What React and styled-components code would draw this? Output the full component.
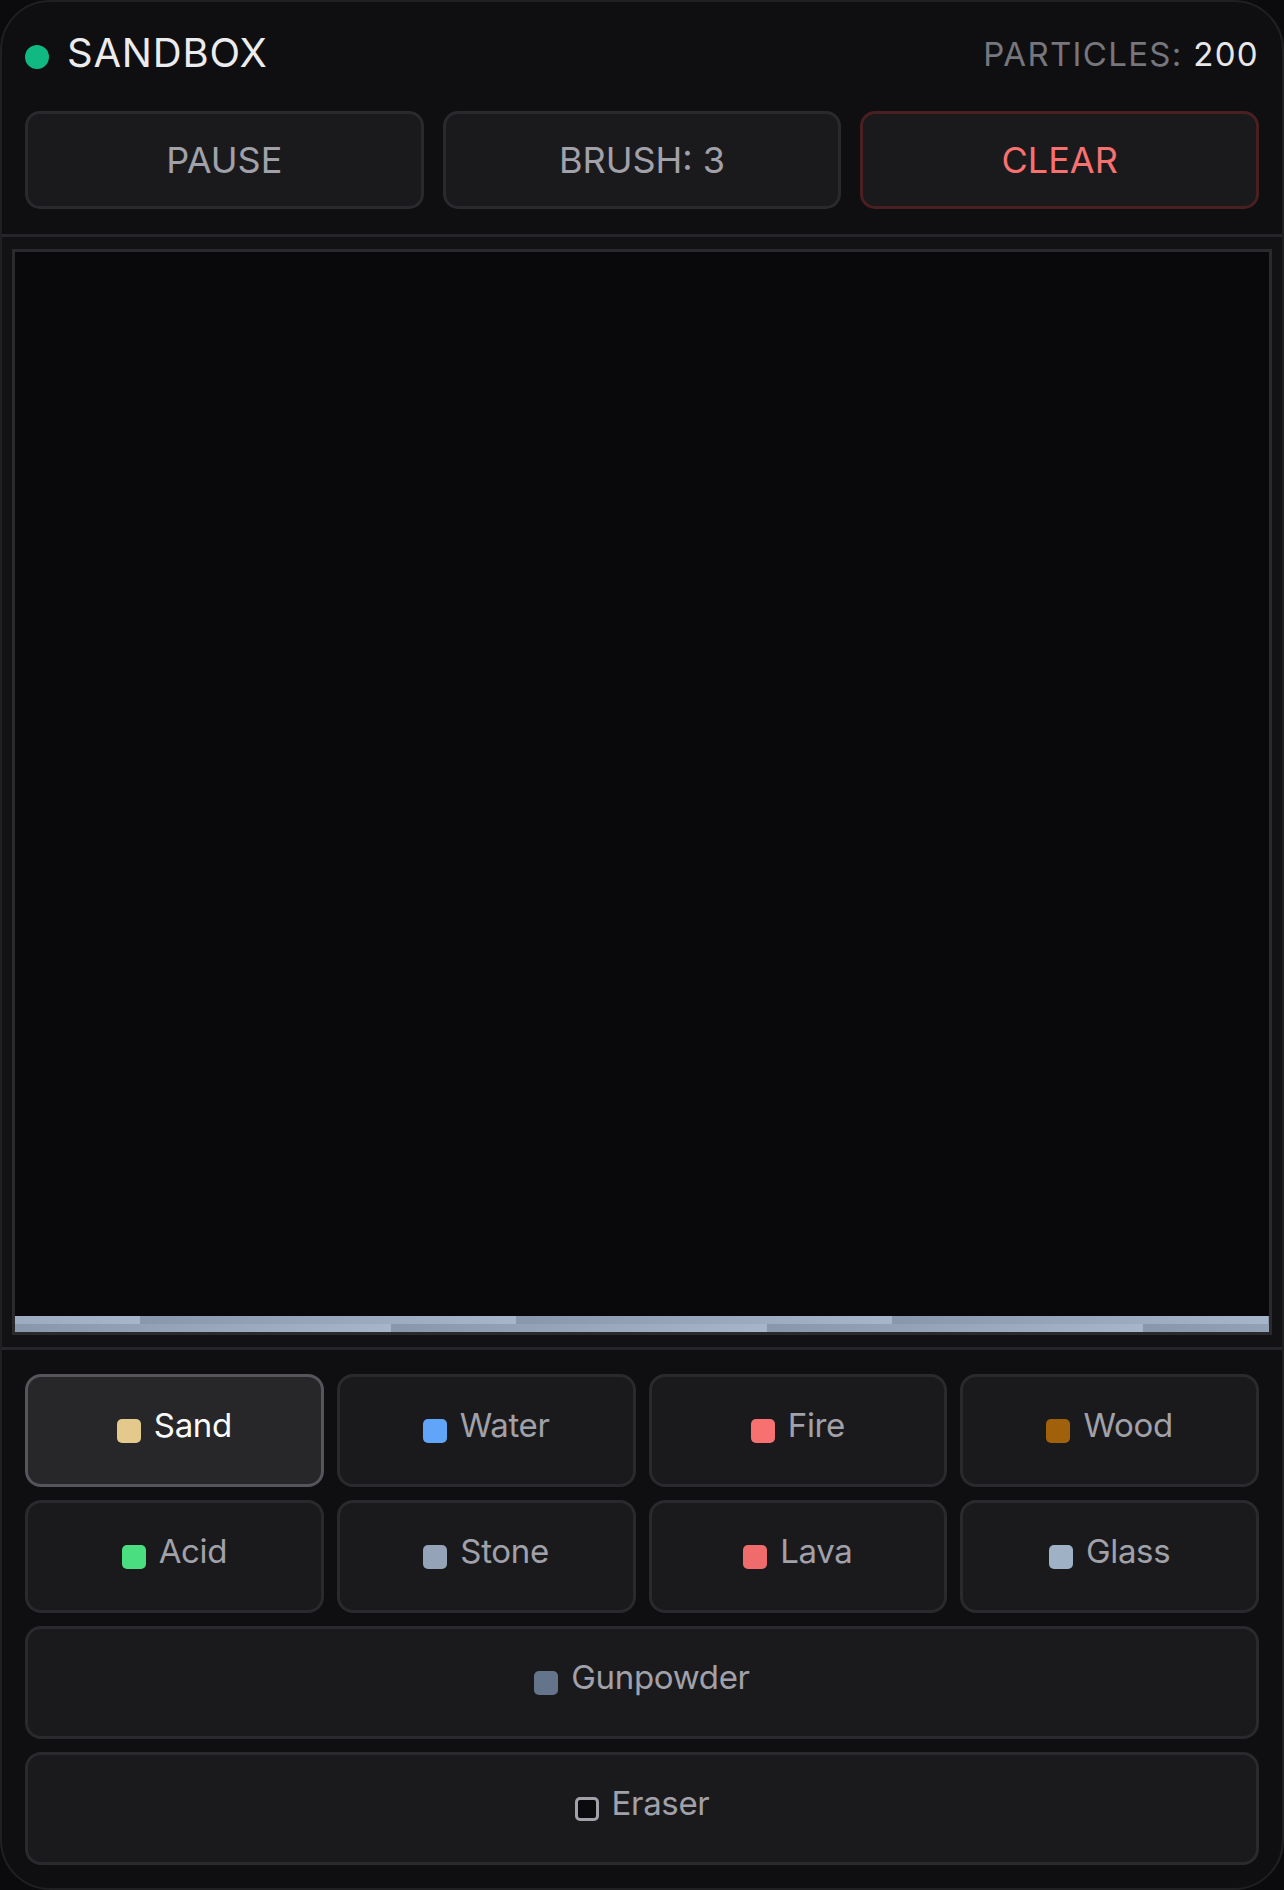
import React from "react";
import styled, { createGlobalStyle } from "styled-components";

const GlobalStyle = createGlobalStyle`
  html, body {
    margin: 0;
    padding: 0;
    background: #0b0b0d;
  }
  body {
    font-family: Inter, "Noto Sans", sans-serif;
    -webkit-font-smoothing: antialiased;
  }
  * {
    box-sizing: border-box;
  }
`;

const Panel = styled.div`
  width: 1284px;
  height: 1890px;
  display: flex;
  flex-direction: column;
  background: #0f0f11;
  border: 2px solid #202023;
  border-radius: 50px;
  overflow: hidden;
`;

const Header = styled.header`
  padding: 20px 23px 25px;
  border-bottom: 3px solid #26262a;
`;

const TitleRow = styled.div`
  height: 60px;
  display: flex;
  align-items: center;
  justify-content: space-between;
`;

const Brand = styled.div`
  display: flex;
  align-items: center;
  gap: 18px;
`;

const Dot = styled.span`
  width: 24px;
  height: 24px;
  margin-top: 10px;
  border-radius: 50%;
  background: #10b981;
`;

const Title = styled.h1`
  margin: 0;
  font-size: 40px;
  font-weight: 400;
  letter-spacing: 0.02em;
  color: #ececee;
`;

const Count = styled.div`
  margin-top: 4px;
  font-size: 33px;
  letter-spacing: 0.04em;
  color: #76767d;
`;

const CountValue = styled.span`
  color: #e8e8ea;
`;

const Controls = styled.div`
  margin-top: 29px;
  display: grid;
  grid-template-columns: repeat(3, 1fr);
  gap: 19px;
`;

const ControlButton = styled.button`
  height: 98px;
  border-radius: 15px;
  border: 3px solid ${(p) => (p.$danger ? "#4a1f22" : "#2a2a2e")};
  background: #1a1a1d;
  color: ${(p) => (p.$danger ? "#f87171" : "#a1a1aa")};
  font-family: inherit;
  font-size: 36px;
  letter-spacing: 0;
  cursor: pointer;
`;

const Stage = styled.section`
  flex: 1;
  display: flex;
  flex-direction: column;
  padding: 12px 10px;
  background: #121214;
  border-bottom: 3px solid #26262a;
`;

const Canvas = styled.div`
  flex: 1;
  display: flex;
  flex-direction: column;
  justify-content: flex-end;
  background: #09090b;
  border: 3px solid #2a2a2e;
`;

const ParticleRow = styled.div`
  height: 8px;
  background: repeating-linear-gradient(
    90deg,
    #8997ad ${(p) => p.$offset - 376}px,
    #a7b5cb ${(p) => p.$offset}px
  );
`;

const Materials = styled.section`
  padding: 24px 23px 23px;
  display: grid;
  grid-template-columns: repeat(4, 1fr);
  grid-auto-rows: 113px;
  gap: 13px;
`;

const MaterialButton = styled.button`
  grid-column: ${(p) => (p.$wide ? "1 / -1" : "auto")};
  display: flex;
  align-items: center;
  justify-content: center;
  gap: 13px;
  border-radius: 16px;
  border: 3px solid ${(p) => (p.$active ? "#55555c" : "#2a2a2e")};
  background: ${(p) => (p.$active ? "#27272a" : "#1a1a1d")};
  color: ${(p) => (p.$active ? "#fafafa" : "#a1a1aa")};
  font-family: inherit;
  font-size: 33px;
  letter-spacing: -0.01em;
  cursor: pointer;
`;

const Swatch = styled.span`
  width: 24px;
  height: 24px;
  border-radius: 5px;
  background: ${(p) => p.$color || "#0b0b0d"};
  border: ${(p) => (p.$color ? "none" : "3px solid #a1a1aa")};
`;

const Label = styled.span`
  margin-bottom: 12px;
`;

const materials = [
  { name: "Sand", color: "#e3c98c" },
  { name: "Water", color: "#60a5fa" },
  { name: "Fire", color: "#f87171" },
  { name: "Wood", color: "#a1600a" },
  { name: "Acid", color: "#4ade80" },
  { name: "Stone", color: "#94a3b8" },
  { name: "Lava", color: "#f06b6b" },
  { name: "Glass", color: "#9fb1c5" },
  { name: "Gunpowder", color: "#64748b", wide: true },
  { name: "Eraser", color: null, wide: true },
];

const App = () => {
  return (
    <Panel>
      <GlobalStyle />
      <Header>
        <TitleRow>
          <Brand>
            <Dot />
            <Title>SANDBOX</Title>
          </Brand>
          <Count>
            PARTICLES: <CountValue>200</CountValue>
          </Count>
        </TitleRow>
        <Controls>
          <ControlButton>PAUSE</ControlButton>
          <ControlButton>BRUSH: 3</ControlButton>
          <ControlButton $danger>CLEAR</ControlButton>
        </Controls>
      </Header>

      <Stage>
        <Canvas>
          <ParticleRow $offset={125} />
          <ParticleRow $offset={376} />
        </Canvas>
      </Stage>

      <Materials>
        {materials.map((m) => (
          <MaterialButton key={m.name} $active={m.name === "Sand"} $wide={m.wide}>
            <Swatch $color={m.color} />
            <Label>{m.name}</Label>
          </MaterialButton>
        ))}
      </Materials>
    </Panel>
  );
};

export default App;
